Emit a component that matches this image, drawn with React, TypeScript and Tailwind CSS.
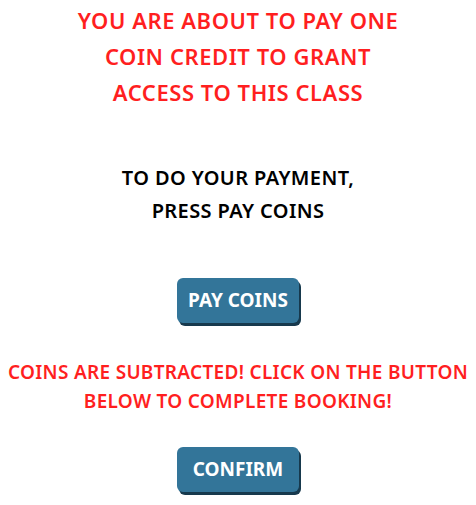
export default function App() {
  return (
    <div className="flex min-h-screen w-full flex-col items-center bg-white text-center font-['Noto_Sans',sans-serif] font-semibold">
      <h2 className="mt-[2px] text-[22px] leading-[36px] tracking-[0.55px] text-[#ff1f1f]">
        YOU ARE ABOUT TO PAY ONE
        <br />
        COIN CREDIT TO GRANT
        <br />
        ACCESS TO THIS CLASS
      </h2>

      <p className="mt-[51px] text-[20px] leading-[33px] tracking-[0.4px] text-black">
        TO DO YOUR PAYMENT,
        <br />
        PRESS PAY COINS
      </p>

      <button className="mt-[51px] h-[45px] w-[122px] rounded-[6px] bg-[#337599] text-[19px] font-bold text-white shadow-[2px_3px_0_#17394d]">
        PAY COINS
      </button>

      <p className="mt-[35px] text-[19px] leading-[29px] tracking-[0.3px] text-[#ff1f1f]">
        COINS ARE SUBTRACTED! CLICK ON THE BUTTON
        <br />
        BELOW TO COMPLETE BOOKING!
      </p>

      <button className="mt-[31px] h-[45px] w-[122px] rounded-[6px] bg-[#337599] text-[19px] font-bold text-white shadow-[2px_3px_0_#17394d]">
        CONFIRM
      </button>
    </div>
  );
}
